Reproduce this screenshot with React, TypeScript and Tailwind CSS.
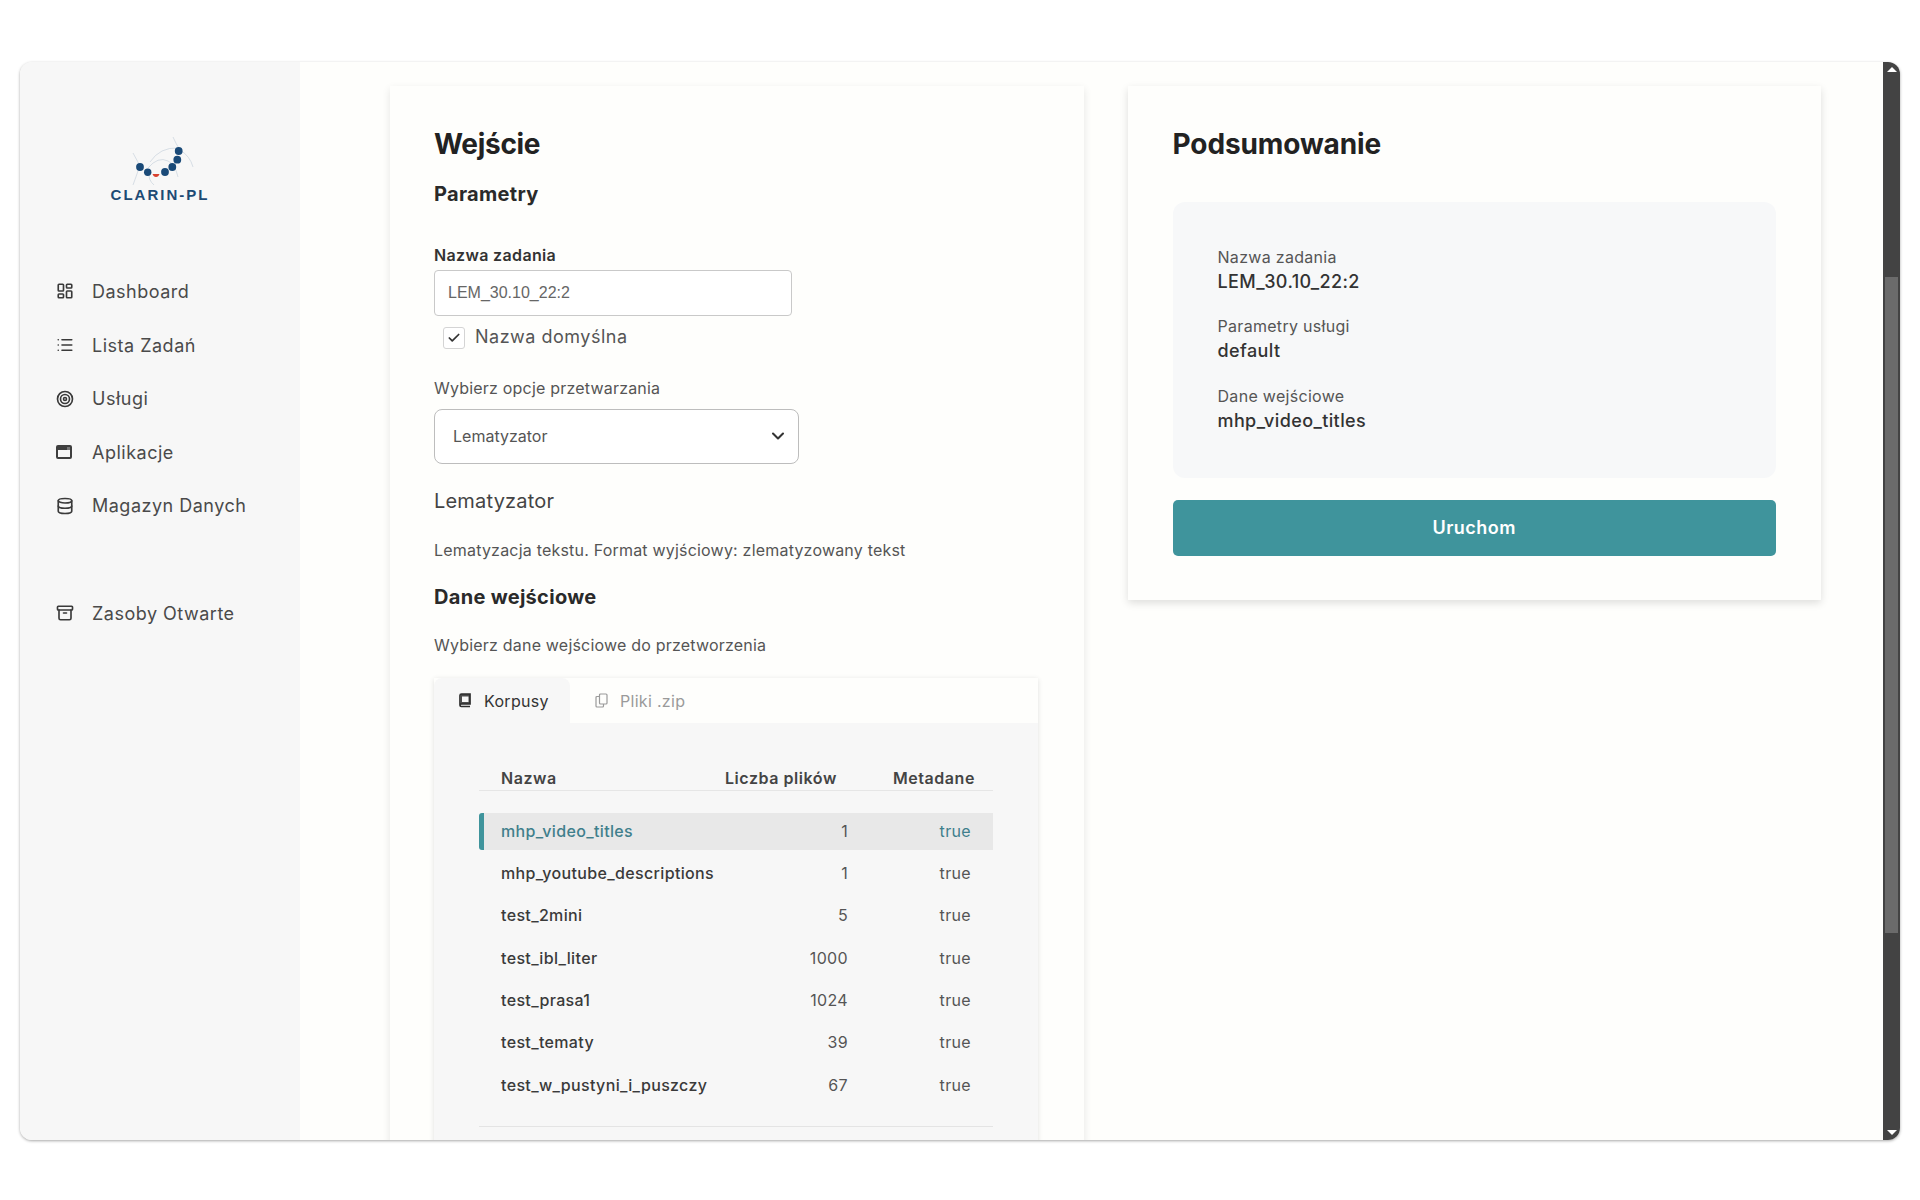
import { Archive, Check, ChevronDown, Database, LayoutDashboard, List, Target } from "lucide-react";
import type { ReactNode } from "react";

const corpora = [
  { name: "mhp_video_titles", files: 1, selected: true },
  { name: "mhp_youtube_descriptions", files: 1 },
  { name: "test_2mini", files: 5 },
  { name: "test_ibl_liter", files: 1000 },
  { name: "test_prasa1", files: 1024 },
  { name: "test_tematy", files: 39 },
  { name: "test_w_pustyni_i_puszczy", files: 67 },
];

function AppWindowIcon() {
  return (
    <svg width="16" height="14" viewBox="0 0 16 14" fill="none">
      <rect x="1" y="1" width="14" height="12" rx="1" stroke="#3f3f3f" strokeWidth="2" />
      <path d="M1 1h10v4H1z" fill="#3f3f3f" />
      <path d="M11 1h4v4h-4z" fill="#3f3f3f" opacity="0.7" />
    </svg>
  );
}

function Logo() {
  return (
    <div className="flex flex-col items-center">
      <svg width="80" height="55" viewBox="0 0 80 55" fill="none">
        <g stroke="#c9d3dc" strokeWidth="0.7">
          <path d="M13 23Q18 32 22 40" />
          <path d="M19 38Q16 47 13 55" />
          <path d="M30 32Q40 17 58 18" />
          <path d="M53 7Q56 14 60 20Q70 26 73 37" />
          <path d="M28 38Q38 26 48 31Q55 34 58 47" />
          <path d="M29 42Q28 50 34 55" />
        </g>
        <g fill="#1a4a78">
          <circle cx="20" cy="37" r="3.900" />
          <circle cx="27.700" cy="42.300" r="3.700" />
          <circle cx="45" cy="42" r="3.900" />
          <circle cx="52.300" cy="37" r="3.900" />
          <circle cx="57.300" cy="29.700" r="3.900" />
          <circle cx="58.700" cy="21" r="3.900" />
        </g>
        <path d="M32.500 44h7q-1 3-3.500 3t-3.500-3z" fill="#d8412f" />
      </svg>
      <div className="mt-[2px] font-['Liberation_Sans',sans-serif] text-[15px] leading-4 font-bold tracking-[2px] text-[#1d4a74]">
        CLARIN-PL
      </div>
    </div>
  );
}

function NavItem({ icon, label }: { icon: ReactNode; label: string }) {
  return (
    <div className="flex h-[53.6px] items-center text-[18px] tracking-[0.5px] text-[#4a4a4a]">
      <div className="flex w-[36px] shrink-0 items-center text-[#3a3a3a]">{icon}</div>
      {label}
    </div>
  );
}

function Sidebar() {
  return (
    <aside className="w-[280px] shrink-0 bg-[#f7f7f7] pt-[68px]">
      <Logo />
      <nav className="mt-[61.7px] pl-[36px]">
        <NavItem icon={<LayoutDashboard size={18} strokeWidth={2.2} />} label="Dashboard" />
        <NavItem icon={<List size={18} strokeWidth={2.2} />} label="Lista Zadań" />
        <NavItem icon={<Target size={18} strokeWidth={2.2} />} label="Usługi" />
        <NavItem icon={<AppWindowIcon />} label="Aplikacje" />
        <NavItem icon={<Database size={18} strokeWidth={2.2} />} label="Magazyn Danych" />
        <div className="h-[53.6px]" />
        <NavItem icon={<Archive size={18} strokeWidth={2.2} />} label="Zasoby Otwarte" />
      </nav>
    </aside>
  );
}

function BookIcon() {
  return (
    <svg width="13" height="15" viewBox="0 0 13 15" fill="none">
      <path d="M2 12V2.500A1.500 1.500 0 0 1 3.500 1H12v10H3.300Q2 11 2 12.200Q2 13.500 3.300 13.500H12" stroke="#2e2e2e" strokeWidth="1.700" />
      <path d="M3 1h9v10H3z" fill="#2e2e2e" opacity="0.85" />
      <path d="M4 3.500h6.500V9H4z" fill="#f7f7f7" />
    </svg>
  );
}

function FilesIcon() {
  return (
    <svg width="13" height="15" viewBox="0 0 13 15" fill="none" stroke="#9a9a9a" strokeWidth="1.200">
      <rect x="4.500" y="1" width="7.500" height="10" rx="1" />
      <path d="M4.500 3.500H2a1 1 0 0 0-1 1V13a1 1 0 0 0 1 1h5.500a1 1 0 0 0 1-1v-2" />
    </svg>
  );
}

function CorpusTable() {
  return (
    <div className="mx-[45px] pt-[38px]">
      <div className="grid h-[30px] grid-cols-[224px_123px_123px] items-end border-b border-[#e6e6e6] pb-[2px] pl-[22px] text-[16px] leading-5 font-semibold tracking-[0.55px] text-[#444]">
        <div>Nazwa</div>
        <div className="whitespace-nowrap">Liczba plików</div>
        <div className="pl-[45px] whitespace-nowrap">Metadane</div>
      </div>
      <div className="mt-[22px] flex flex-col gap-[5.400px]">
        {corpora.map((row) => (
          <div
            key={row.name}
            className={
              row.selected
                ? "grid h-[37px] grid-cols-[224px_123px_123px] items-center rounded-l-[3px] border-l-[5px] border-[#3f949c] bg-[#e8e8e8] pb-[2px] pl-[17px] text-[16px] tracking-[0.35px] text-[#3f7f8c]"
                : "grid h-[37px] grid-cols-[224px_123px_123px] items-center pb-[2px] pl-[22px] text-[16px] tracking-[0.35px] text-[#3a3a3a]"
            }
          >
            <div className="font-medium whitespace-nowrap">{row.name}</div>
            <div className="text-right text-[#555]">{row.files}</div>
            <div className={row.selected ? "text-right text-[#3f7f8c]" : "text-right text-[#555]"}>true</div>
          </div>
        ))}
      </div>
      <div className="mt-[22px] h-px bg-[#e4e4e4]" />
    </div>
  );
}

function InputCard() {
  return (
    <section className="bg-[#fefefc] pt-[41px] pr-[46px] pb-10 pl-[44px] shadow-[0_3px_8px_rgba(0,0,0,0.10)]">
      <h1 className="text-[28px] leading-[34px] font-bold tracking-[-0.3px] text-[#222]">Wejście</h1>
      <h2 className="mt-[20px] text-[20px] leading-[26px] font-bold tracking-[0.3px] text-[#2a2a2a]">Parametry</h2>
      <label className="mt-[37px] block text-[16px] leading-[22px] font-semibold tracking-[0.35px] text-[#333]">Nazwa zadania</label>
      <div className="mt-1 flex h-[46px] w-[358px] items-center rounded-[4px] border border-[#c9c9c9] bg-white pl-[13px] font-['Liberation_Sans',sans-serif] text-[16px] text-[#666]">
        LEM_30.10_22:2
      </div>
      <div className="mt-[11px] flex h-[22px] items-center pl-[9px]">
        <div className="flex size-[22px] items-center justify-center rounded-[3px] border border-[#d4d4d4] bg-white">
          <Check size={14} strokeWidth={3} className="text-[#333]" />
        </div>
        <span className="ml-[10px] pb-[3px] text-[18px] tracking-[0.5px] text-[#555]">Nazwa domyślna</span>
      </div>
      <label className="mt-[28px] block text-[16px] leading-[22px] tracking-[0.2px] text-[#555]">Wybierz opcje przetwarzania</label>
      <div className="mt-[10px] flex h-[55px] w-[365px] items-center justify-between rounded-[8px] border border-[#bdbdbd] bg-white pr-[10px] pb-[2px] pl-[18px] text-[16px] text-[#555]">
        Lematyzator
        <ChevronDown size={20} strokeWidth={2.500} className="text-[#333]" />
      </div>
      <h3 className="mt-[23px] text-[20px] leading-[28px] tracking-[0.2px] text-[#444]">Lematyzator</h3>
      <p className="mt-[24px] text-[16px] leading-[22px] tracking-[0.2px] text-[#555]">Lematyzacja tekstu. Format wyjściowy: zlematyzowany tekst</p>
      <h2 className="mt-[23px] text-[20px] leading-[26px] font-bold tracking-[0.3px] text-[#2a2a2a]">Dane wejściowe</h2>
      <p className="mt-[24px] text-[16px] leading-[22px] tracking-[0.2px] text-[#555]">Wybierz dane wejściowe do przetworzenia</p>
      <div className="mt-[22px] bg-[#f7f7f7] pb-10 shadow-[0_1px_5px_rgba(0,0,0,0.12)]">
        <div className="flex h-[45px] bg-[#fefefc]">
          <div className="flex w-[136px] items-center gap-[13px] rounded-t-[8px] bg-[#f7f7f7] pl-[24px] text-[16px] tracking-[0.3px] text-[#333]">
            <BookIcon />
            Korpusy
          </div>
          <div className="flex items-center gap-[12px] pl-[25px] text-[16px] tracking-[0.3px] text-[#9a9a9a]">
            <FilesIcon />
            Pliki .zip
          </div>
        </div>
        <CorpusTable />
      </div>
    </section>
  );
}

function SummaryItem({ label, value }: { label: string; value: string }) {
  return (
    <div>
      <div className="text-[16px] leading-[22px] tracking-[0.3px] text-[#555]">{label}</div>
      <div className="mt-px text-[18px] leading-[26px] font-medium tracking-[0.4px] text-[#333]">{value}</div>
    </div>
  );
}

function SummaryCard() {
  return (
    <section className="self-start bg-[#fefefc] px-[45px] pt-[41px] pb-[44px] shadow-[0_3px_8px_rgba(0,0,0,0.13)]">
      <h1 className="text-[28px] leading-[34px] font-bold tracking-[-0.1px] text-[#222]">Podsumowanie</h1>
      <div className="mt-[41px] flex flex-col gap-[20.300px] rounded-[12px] bg-[#f7f8f9] px-[45px] pt-[44px] pb-[44px]">
        <SummaryItem label="Nazwa zadania" value="LEM_30.10_22:2" />
        <SummaryItem label="Parametry usługi" value="default" />
        <SummaryItem label="Dane wejściowe" value="mhp_video_titles" />
      </div>
      <button className="mt-[22px] h-[56px] w-full rounded-[5px] bg-[#3f949c] text-[18px] font-semibold tracking-[0.5px] text-white">Uruchom</button>
    </section>
  );
}

function Scrollbar() {
  return (
    <div className="flex w-[17px] shrink-0 flex-col items-center bg-[#434343] pt-[5px] pb-[5px]">
      <div className="h-0 w-0 border-x-[5px] border-b-[5px] border-x-transparent border-b-white" />
      <div className="mt-[205px] h-[656px] w-[13px] bg-[#6b6b6b]" />
      <div className="flex-1" />
      <div className="h-0 w-0 border-x-[5px] border-t-[5px] border-x-transparent border-t-white" />
    </div>
  );
}

export default function App() {
  return (
    <div className="min-h-screen bg-white px-5 pt-[62px] font-['Inter',sans-serif]">
      <div className="flex h-[1078px] overflow-hidden rounded-[12px] bg-[#fefefc] shadow-[0_1px_3px_rgba(0,0,0,0.35)]">
        <Sidebar />
        <main className="flex-1 overflow-hidden pt-[24px] pr-[62px] pl-[90px]">
          <div className="grid grid-cols-2 gap-11">
            <InputCard />
            <SummaryCard />
          </div>
        </main>
        <Scrollbar />
      </div>
    </div>
  );
}
